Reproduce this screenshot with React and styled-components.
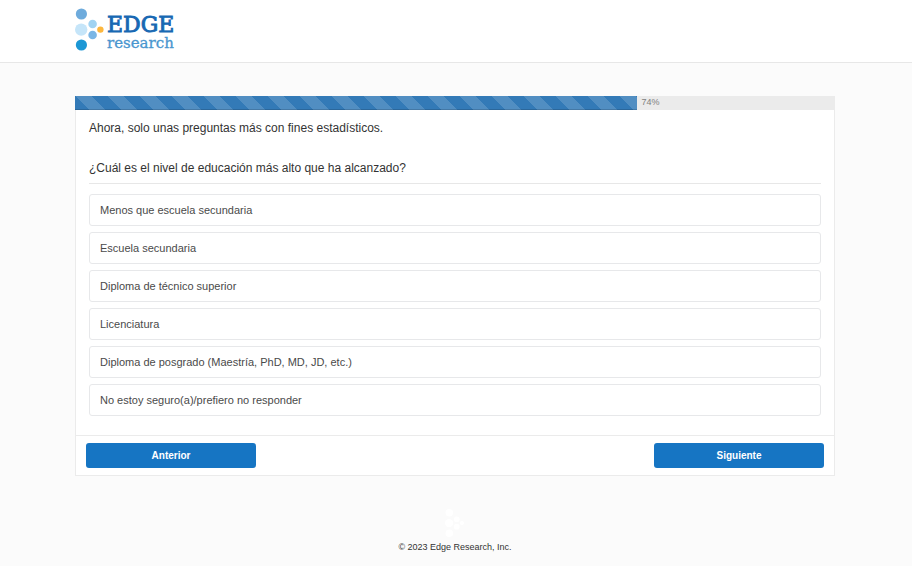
import { useState } from 'react';
import styled, { createGlobalStyle } from 'styled-components';

const GlobalStyle = createGlobalStyle`
  *, *::before, *::after {
    box-sizing: border-box;
  }

  body {
    margin: 0;
    background: #fbfbfb;
    color: #333;
    font-family: "Liberation Sans", Arial, sans-serif;
    font-size: 12px;
    line-height: 16px;
  }
`;

const Container = styled.div`
  width: 100%;
  max-width: 762px;
  margin: 0 auto;
  padding-right: 2px;
`;

const Header = styled.header`
  padding: 7px 0 10px;
  background: #fff;
  border-bottom: 1px solid #e7e7e7;
`;

const HomeLink = styled.a`
  display: block;
  width: 104px;
`;

const LogoSvg = styled.svg`
  display: block;
`;

const Main = styled.main`
  padding: 33px 0 32px;
`;

const ProgressTrack = styled.div`
  display: flex;
  height: 14px;
  background: #ebebeb;
`;

const ProgressBar = styled.div`
  background-color: #337ab7;
  background-image: linear-gradient(
    45deg,
    rgba(255, 255, 255, 0.15) 25%,
    transparent 25%,
    transparent 50%,
    rgba(255, 255, 255, 0.15) 50%,
    rgba(255, 255, 255, 0.15) 75%,
    transparent 75%,
    transparent
  );
  background-size: 32px 32px;
  box-shadow: inset 0 -1px 0 rgba(0, 0, 0, 0.15);
`;

const ProgressLabel = styled.span`
  padding-left: 4px;
  color: #808080;
  font-size: 9px;
  line-height: 12px;
`;

const Survey = styled.form`
  background: #fff;
  border: 1px solid #ebebeb;
  border-top: 0;
`;

const Questions = styled.div`
  padding: 10px 13px 19px;
`;

const Intro = styled.p`
  margin: 0 0 24px;
`;

const Fieldset = styled.fieldset`
  min-width: 0;
  margin: 0;
  padding: 0;
  border: 0;
`;

const Legend = styled.legend`
  width: 100%;
  margin-bottom: 10px;
  padding: 0 0 7px;
  border-bottom: 1px solid #e7e7e7;
`;

const Options = styled.div`
  display: grid;
  gap: 6px;
`;

const Option = styled.label`
  display: block;
  padding: 7px 10px;
  border: 1px solid ${({ $checked }) => ($checked ? '#1675c3' : '#e7e8ea')};
  border-radius: 3px;
  color: #4a4a4a;
  font-size: 11px;
  cursor: pointer;

  &:focus-within {
    border-color: #1675c3;
  }
`;

const Radio = styled.input`
  position: absolute;
  opacity: 0;
  pointer-events: none;
`;

const Actions = styled.div`
  display: flex;
  justify-content: space-between;
  padding: 7px 10px;
  border-top: 1px solid #ebebeb;
`;

const Button = styled.button`
  width: 170px;
  height: 25px;
  padding: 0;
  border: 0;
  border-radius: 3px;
  background: #1675c3;
  color: #fff;
  font-family: inherit;
  font-size: 10px;
  font-weight: bold;
  cursor: pointer;

  &:hover {
    background: #1265a9;
  }
`;

const Footer = styled.footer`
  display: flex;
  flex-direction: column;
  align-items: center;
  gap: 3px;
  font-size: 9px;
  line-height: 12px;
`;

const options = [
  'Menos que escuela secundaria',
  'Escuela secundaria',
  'Diploma de técnico superior',
  'Licenciatura',
  'Diploma de posgrado (Maestría, PhD, MD, JD, etc.)',
  'No estoy seguro(a)/prefiero no responder',
];

const dots = [
  { cx: 6.4, cy: 7, r: 5.6, fill: '#6eabdc' },
  { cx: 6.2, cy: 22.6, r: 6.2, fill: '#c5e5f9' },
  { cx: 6.4, cy: 38, r: 5.6, fill: '#1c97d5' },
  { cx: 17.6, cy: 17, r: 4.3, fill: '#a1d3f2' },
  { cx: 17.6, cy: 28, r: 4.3, fill: '#7ab6e5' },
  { cx: 25.4, cy: 22.6, r: 3.2, fill: '#fdb73e' },
];

function Dots({ fill }) {
  return dots.map((dot) => (
    <circle key={`${dot.cx}-${dot.cy}`} cx={dot.cx} cy={dot.cy} r={dot.r} fill={fill || dot.fill} />
  ));
}

function Logo() {
  return (
    <LogoSvg width="104" height="45" viewBox="0 0 104 45">
      <Dots />
      <text x="32" y="25" fill="#1768b3" stroke="#1768b3" strokeWidth="0.9" fontFamily="DejaVu Serif, serif" fontSize="22">
        EDGE
      </text>
      <text
        x="32"
        y="41"
        fill="#4a96cf"
        stroke="#4a96cf"
        strokeWidth="0.3"
        fontFamily="DejaVu Serif, serif"
        fontWeight="200"
        fontSize="15"
      >
        research
      </text>
    </LogoSvg>
  );
}

export default function App() {
  const [answer, setAnswer] = useState('');
  const progress = 74;

  return (
    <>
      <GlobalStyle />
      <Header>
        <Container>
          <HomeLink href="#" aria-label="Edge Research">
            <Logo />
          </HomeLink>
        </Container>
      </Header>
      <Main>
        <Container>
          <ProgressTrack>
            <ProgressBar style={{ width: `${progress}%` }} />
            <ProgressLabel>{progress}%</ProgressLabel>
          </ProgressTrack>
          <Survey onSubmit={(e) => e.preventDefault()}>
            <Questions>
              <Intro>Ahora, solo unas preguntas más con fines estadísticos.</Intro>
              <Fieldset>
                <Legend>¿Cuál es el nivel de educación más alto que ha alcanzado?</Legend>
                <Options>
                  {options.map((option) => (
                    <Option key={option} $checked={answer === option}>
                      <Radio
                        type="radio"
                        name="education"
                        value={option}
                        checked={answer === option}
                        onChange={(e) => setAnswer(e.target.value)}
                      />
                      {option}
                    </Option>
                  ))}
                </Options>
              </Fieldset>
            </Questions>
            <Actions>
              <Button type="button">Anterior</Button>
              <Button type="submit">Siguiente</Button>
            </Actions>
          </Survey>
        </Container>
      </Main>
      <Container>
        <Footer>
          <LogoSvg width="20" height="30" viewBox="0 0 30 45" aria-hidden="true">
            <Dots fill="#fff" />
          </LogoSvg>
          <span>© 2023 Edge Research, Inc.</span>
        </Footer>
      </Container>
    </>
  );
}
